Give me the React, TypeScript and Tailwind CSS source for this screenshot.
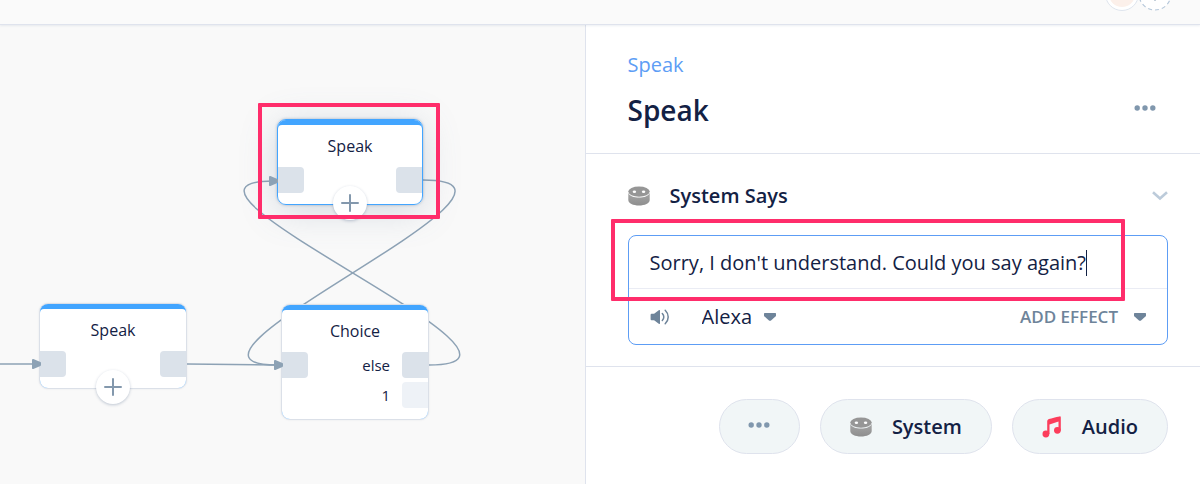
import React from 'react';

interface FlowNodeProps {
  title: string;
  className: string;
  selected?: boolean;
  addable?: boolean;
  children: React.ReactNode;
}

const SystemIcon: React.FC = () => (
  <svg width="22" height="20" viewBox="0 0 22 20" className="shrink-0" aria-hidden="true">
    <defs>
      <linearGradient id="systemBody" x1="0" y1="0" x2="0" y2="1">
        <stop offset="0" stopColor="#a6a6a6" />
        <stop offset="1" stopColor="#8e8e8e" />
      </linearGradient>
    </defs>
    <path d="M.3 6.800C1.600 10.200 6 11.600 11 11.600s9.400-1.400 10.700-4.800V14c0 3.400-4.900 5.500-10.700 5.500S.3 17.400.3 14z" fill="url(#systemBody)" />
    <ellipse cx="11" cy="5.600" rx="10.700" ry="5.100" fill="#969696" />
    <ellipse cx="6.400" cy="5.700" rx="1.700" ry="1.200" fill="#fff" />
    <ellipse cx="15.600" cy="5.700" rx="1.700" ry="1.200" fill="#fff" />
  </svg>
);

const AudioIcon: React.FC = () => (
  <svg width="20" height="22" viewBox="0 0 20 22" className="shrink-0" aria-hidden="true">
    <g fill="#fc3d5b">
      <circle cx="3.900" cy="18" r="3.400" />
      <circle cx="15.400" cy="14.300" r="3.400" />
      <path d="M5.200 18V5.600c0-1.200.6-2 1.700-2.500C10 1.900 13.500 1.200 17.600.4c.8-.2 1.200.2 1.200 1v12.900h-2.300V5.500L7.500 8.400V18z" />
    </g>
  </svg>
);

const SpeakerIcon: React.FC = () => (
  <svg width="20" height="18" viewBox="0 0 20 18" aria-hidden="true">
    <path d="M1.500 5.800h2.600l5-3.700c.4-.3.900 0 .9.400v13c0 .4-.5.700-.9.400l-5-3.700H1.500c-.5 0-.9-.4-.9-.9V6.700c0-.5.4-.9.9-.9z" fill="#6e849a" />
    <path d="M12.300 5.500c2 2 2 5 0 7M15.200 2.200c4 3.900 4 9.700 0 13.600" fill="none" stroke="#6e849a" strokeWidth="1.500" strokeLinecap="round" />
  </svg>
);

const CaretIcon: React.FC = () => (
  <svg width="12" height="8" viewBox="0 0 12 8" className="shrink-0" aria-hidden="true">
    <path d="M1 0h10c.7 0 1 .3 1 1v1.500c0 .3-.1.500-.3.700L7.300 7.300c-.8.700-1.800.7-2.600 0L.3 3.200C.1 3 0 2.800 0 2.500V1c0-.7.3-1 1-1z" fill="#6e849a" />
  </svg>
);

const DotsIcon: React.FC = () => (
  <svg width="22" height="6" viewBox="0 0 22 6" aria-hidden="true">
    <g fill="#8097ad">
      <circle cx="3.200" cy="3" r="2.700" />
      <circle cx="11" cy="3" r="2.700" />
      <circle cx="18.800" cy="3" r="2.700" />
    </g>
  </svg>
);

const FlowNode: React.FC<FlowNodeProps> = ({ title, className, selected, addable, children }) => (
  <div
    className={`absolute rounded-[9px] border ${
      selected
        ? 'border-[#42a5ff] shadow-[0_6px_36px_rgba(100,125,150,0.25),0_0_3px_rgba(60,90,130,0.4)]'
        : 'border-[#dbe0e8] shadow-[0_0_2px_rgba(17,49,96,0.1)]'
    } ${className}`}
  >
    <div className="h-full overflow-hidden rounded-lg bg-[#42a5ff] pt-[5px]">
      <div className="h-full rounded-t-[4px] bg-white pt-[9px]">
        <h3 className="text-center text-base leading-6">{title}</h3>
        {children}
      </div>
    </div>
    {addable && (
      <button
        aria-label="Add block"
        className="absolute -bottom-4 left-1/2 flex size-[34px] -translate-x-1/2 items-center justify-center rounded-full bg-white shadow-[0_1px_3px_rgba(17,49,96,0.25)]"
      >
        <svg width="18" height="18" viewBox="0 0 18 18" aria-hidden="true">
          <path d="M9 1v16M1 9h16" stroke="#8398ad" strokeWidth="2" strokeLinecap="round" />
        </svg>
      </button>
    )}
  </div>
);

const PortPair: React.FC = () => (
  <div className="mt-[9px] flex justify-between">
    <span className="size-[26px] rounded-r-[4px] bg-[#dbe2ea]" />
    <span className="size-[26px] rounded-l-[4px] bg-[#dbe2ea]" />
  </div>
);

const links = [
  'M0 339H36',
  'M187 339L278 340',
  'M423 155C574 155 135 340 277 340',
  'M429 340C578 340 129 156 273 156',
];

const arrows = ['M33 335l7 3v2l-7 3z', 'M275 336l7 3v2l-7 3z', 'M270 152l7 3v2l-7 3z'];

const FlowCanvas: React.FC = () => (
  <main className="relative min-w-0 flex-[39] overflow-hidden bg-[#f9f9f9]">
    <svg className="absolute inset-0 size-full" aria-hidden="true">
      {links.map((d) => (
        <path key={d} d={d} fill="none" stroke="#8da2b5" strokeWidth="1.500" />
      ))}
    </svg>

    <FlowNode title="Speak" className="left-[277px] top-[94px] h-[86px] w-[146px]" selected addable>
      <PortPair />
    </FlowNode>

    <FlowNode title="Speak" className="left-[39px] top-[278px] h-[86px] w-[148px]" addable>
      <PortPair />
    </FlowNode>

    <FlowNode title="Choice" className="left-[281px] top-[279px] h-[116px] w-[148px]">
      <div className="mt-[9px] flex items-center">
        <span className="size-[26px] rounded-r-[4px] bg-[#dbe2ea]" />
        <span className="ml-auto mr-3 text-[15px] leading-6">else</span>
        <span className="size-[26px] rounded-l-[4px] bg-[#dbe2ea]" />
      </div>
      <div className="mt-1 flex items-center">
        <span className="ml-auto mr-3 text-[15px] leading-6">1</span>
        <span className="size-[26px] rounded-l-[4px] bg-[#eef2f7]" />
      </div>
    </FlowNode>

    <svg className="pointer-events-none absolute inset-0 size-full" aria-hidden="true">
      {arrows.map((d) => (
        <path key={d} d={d} fill="#8da2b5" stroke="#8da2b5" strokeWidth="2" strokeLinejoin="round" />
      ))}
    </svg>

    {/* callout around the selected block */}
    <div className="pointer-events-none absolute left-[258px] top-[78px] h-[116px] w-[182px] rounded-[1px] border-4 border-[#ff2d6b]" />
  </main>
);

const EditorPanel: React.FC = () => (
  <aside className="flex min-w-0 flex-[41] flex-col border-l border-[#dfe3ed] bg-white">
    <header className="border-b border-[#dfe3ed] pb-[25px] pl-[42px] pr-8 pt-[26px]">
      <a href="#speak" className="block w-fit text-xl leading-7 text-[#5d9df5]">
        Speak
      </a>
      <div className="mt-[13px] flex items-center justify-between pr-3">
        <h1 className="text-[28px] font-semibold leading-9">Speak</h1>
        <button aria-label="More options" className="pb-1">
          <DotsIcon />
        </button>
      </div>
    </header>

    <section className="border-b border-[#dfe3ed] pb-[21px] pl-[42px] pr-8 pt-7">
      <button aria-expanded="true" className="flex w-full items-center text-left">
        <SystemIcon />
        <span className="ml-5 text-xl font-semibold leading-7">System Says</span>
        <svg width="16" height="10" viewBox="0 0 16 10" className="ml-auto" aria-hidden="true">
          <path d="M1 1.200l7 6.300 7-6.300" fill="none" stroke="#bccbda" strokeWidth="2.600" />
        </svg>
      </button>

      <div className="relative mt-[25px] rounded-[8px] border border-[#5d9df5]">
        <div className="flex h-[53px] items-center border-b border-[#eaecf4] px-[21px] pt-0.5">
          <input
            aria-label="System message"
            defaultValue="Sorry, I don't understand. Could you say again?"
            className="field-sizing-content bg-transparent text-xl leading-7 outline-none"
          />
          <span className="h-[26px] w-px bg-[#132144]" />
        </div>
        <div className="flex h-[55px] items-center px-[21px]">
          <SpeakerIcon />
          <label className="ml-8 flex items-center gap-3">
            <select aria-label="Voice" className="field-sizing-content appearance-none bg-transparent text-xl leading-7 outline-none">
              <option>Alexa</option>
            </select>
            <CaretIcon />
          </label>
          <button className="ml-auto flex items-center gap-4 text-[17px] font-semibold leading-6 text-[#6e849a]">
            ADD EFFECT
            <CaretIcon />
          </button>
        </div>
        {/* callout around the message */}
        <div className="pointer-events-none absolute -left-[18px] -top-[17px] right-[42px] h-[82px] rounded-[1px] border-4 border-[#ff2d6b]" />
      </div>
    </section>

    <footer className="flex justify-end gap-5 pr-8 pt-8">
      <button aria-label="More blocks" className="flex h-[55px] w-[81px] items-center justify-center rounded-full border border-[#dfe3ed] bg-[#f1f6f7] pb-1">
        <DotsIcon />
      </button>
      <button className="flex h-[55px] items-center gap-5 rounded-full border border-[#dfe3ed] bg-[#f1f6f7] px-[29px] text-xl font-semibold">
        <SystemIcon />
        System
      </button>
      <button className="flex h-[55px] items-center gap-5 rounded-full border border-[#dfe3ed] bg-[#f1f6f7] px-[29px] text-xl font-semibold">
        <AudioIcon />
        Audio
      </button>
    </footer>
  </aside>
);

const App: React.FC = () => (
  <div className="flex h-screen flex-col font-['Open_Sans',sans-serif] text-[#132144]">
    <header className="z-10 flex h-[25px] shrink-0 items-end justify-end overflow-hidden border-b border-[#dfe3ed] bg-[#fafafa] pb-[13px] pr-[29px] shadow-[0_1px_2px_rgba(17,49,96,0.08)]">
      <div className="size-[34px] shrink-0 rounded-full border border-[#dfe5ee] bg-white p-[3px]">
        <div className="size-full rounded-full bg-[#fcf0ea]" />
      </div>
      <svg width="32" height="34" viewBox="0 0 32 34" className="shrink-0" aria-hidden="true">
        <circle cx="16" cy="17" r="16" fill="#fff" stroke="#b5c7da" strokeWidth="1.200" strokeDasharray="4 3" />
        <path d="M16 11v13M10 17h12" stroke="#8da2b5" />
      </svg>
    </header>
    <div className="flex min-h-0 flex-1">
      <FlowCanvas />
      <EditorPanel />
    </div>
  </div>
);

export default App;
